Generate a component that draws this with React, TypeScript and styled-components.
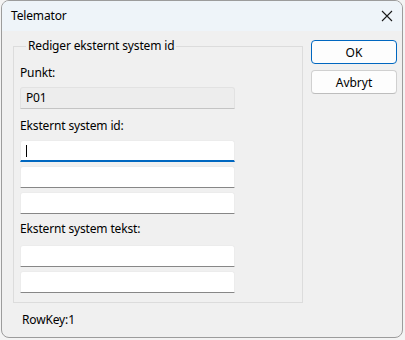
import React from 'react';
import styled, { createGlobalStyle } from 'styled-components';

const GlobalStyle = createGlobalStyle`
  html, body {
    margin: 0;
    padding: 0;
    background: #f3f3f3;
  }
  body {
    font-family: "Noto Sans", "Open Sans", sans-serif;
    font-size: 12px;
    letter-spacing: -0.15px;
    color: #000;
  }
`;

const Window = styled.div`
  margin-left: 1px;
  width: 402px;
  height: 338px;
  box-sizing: border-box;
  border: 1px solid #9c9c9c;
  border-radius: 8px;
  background: #f0f0f0;
  overflow: hidden;
  display: flex;
  flex-direction: column;
`;

const TitleBar = styled.div`
  height: 30px;
  background: #eef4f9;
  display: flex;
  align-items: center;
  justify-content: space-between;
  padding: 0 8px 0 9px;
`;

const Title = styled.span`
  font-size: 12px;
  line-height: 16px;
  color: #000;
`;

const CloseBtn = styled.div`
  width: 12px;
  height: 12px;
  margin-right: 1px;
  display: flex;
`;

const Body = styled.div`
  flex: 1;
  display: flex;
  flex-direction: column;
  padding: 7px 0 0 11px;
`;

const Row = styled.div`
  display: flex;
  align-items: flex-start;
`;

const Group = styled.fieldset`
  margin: 0;
  width: 290px;
  height: 265px;
  box-sizing: border-box;
  border: 1px solid #dcdcdc;
  padding: 0 6px;
  min-inline-size: 0;
`;

const Legend = styled.legend`
  padding: 0 2px;
  margin-left: 6px;
  line-height: 16px;
  color: #000;
`;

const Label = styled.div<{ $top: number }>`
  margin-top: ${p => p.$top}px;
  line-height: 16px;
  color: #000;
`;

const FieldStack = styled.div<{ $top: number }>`
  margin-top: ${p => p.$top}px;
  display: flex;
  flex-direction: column;
  gap: 4px;
`;

const Field = styled.div<{ $readOnly?: boolean; $focused?: boolean }>`
  width: 215px;
  height: 22px;
  box-sizing: border-box;
  background: ${p => (p.$readOnly ? '#ededed' : '#ffffff')};
  border: 1px solid ${p => (p.$readOnly ? '#e2e2e2' : '#ececec')};
  border-bottom: ${p => (p.$focused ? '2px solid #0067c0' : p.$readOnly ? '1px solid #c4c4c4' : '1px solid #878787')};
  border-radius: 3px 3px 0 0;
  display: flex;
  align-items: center;
  padding-left: 5px;
  line-height: 16px;
`;

const Caret = styled.span`
  width: 1px;
  height: 12px;
  background: #000;
  margin-top: 1px;
`;

const Buttons = styled.div`
  margin-left: 8px;
  margin-top: 2px;
  display: flex;
  flex-direction: column;
  gap: 6px;
`;

const Button = styled.button<{ $primary?: boolean }>`
  width: 86px;
  height: 24px;
  box-sizing: border-box;
  font: inherit;
  font-size: 12px;
  color: #000;
  background: #fdfdfd;
  border: 1px solid ${p => (p.$primary ? '#0067c0' : '#d0d0d0')};
  border-bottom-color: ${p => (p.$primary ? '#0067c0' : '#bdbdbd')};
  border-radius: 4px;
  padding: 0;
`;

const Footer = styled.div`
  margin: 9px 0 0 9px;
  line-height: 16px;
`;

export default function App() {
  return (
    <>
      <GlobalStyle />
      <Window>
        <TitleBar>
          <Title>Telemator</Title>
          <CloseBtn>
            <svg width="12" height="12" viewBox="0 0 12 12">
              <path d="M1 1L11 11M11 1L1 11" stroke="#1a1a1a" strokeWidth="1.1" />
            </svg>
          </CloseBtn>
        </TitleBar>
        <Body>
          <Row>
            <Group>
              <Legend>Rediger eksternt system id</Legend>
              <Label $top={11}>Punkt:</Label>
              <FieldStack $top={6}>
                <Field $readOnly>P01</Field>
              </FieldStack>
              <Label $top={9}>Eksternt system id:</Label>
              <FieldStack $top={6}>
                <Field $focused>
                  <Caret />
                </Field>
                <Field />
                <Field />
              </FieldStack>
              <Label $top={7}>Eksternt system tekst:</Label>
              <FieldStack $top={8}>
                <Field />
                <Field />
              </FieldStack>
            </Group>
            <Buttons>
              <Button $primary>OK</Button>
              <Button>Avbryt</Button>
            </Buttons>
          </Row>
          <Footer>RowKey:1</Footer>
        </Body>
      </Window>
    </>
  );
}
